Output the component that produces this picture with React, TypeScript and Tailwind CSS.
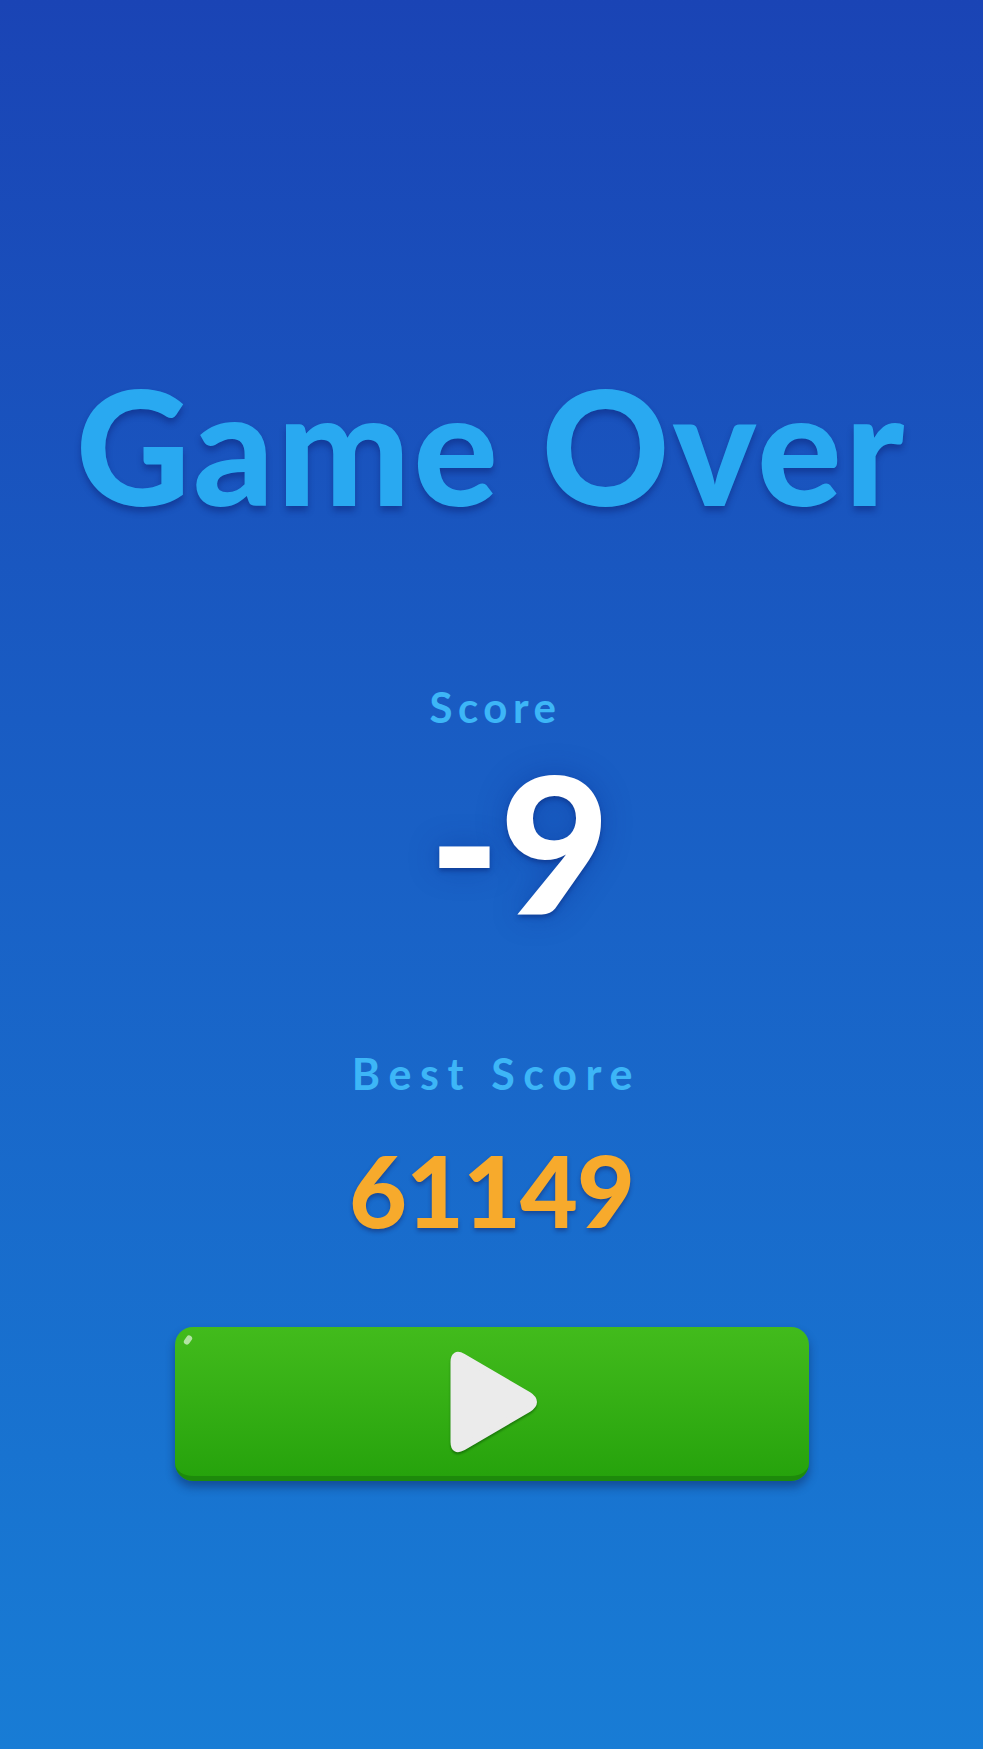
const PlayIcon = () => (
  <svg width="96" height="108" viewBox="0 0 96 108" className="drop-shadow-[0_2px_1px_rgba(0,60,0,0.45)]">
    <path
      d="M10 14 Q10 4 19 9 L84 47 Q95 54 84 61 L19 99 Q10 104 10 94 Z"
      fill="#ebebeb"
      stroke="#ebebeb"
      strokeWidth="7"
      strokeLinejoin="round"
    />
  </svg>
);

export default function App() {
  return (
    <div
      className="min-h-[1749px] w-full bg-gradient-to-b from-[#1a44b5] via-[#1961c6] to-[#187cd5] flex flex-col items-center"
      style={{ fontFamily: 'Lato, "Noto Sans", sans-serif' }}
    >
      {/* titre */}
      <h1 className="mt-[366px] text-[158px] leading-none font-black text-[#29a9f1] tracking-[3px] [text-shadow:0_5px_6px_rgba(10,30,110,0.45)]">
        Game Over
      </h1>

      {/* score courant */}
      <div className="mt-[162px] pl-[8px] text-[42px] leading-none font-bold tracking-[0.13em] text-[#3db6f7]">Score</div>
      <div className="mt-[18px] pl-[56px] text-[190px] leading-none font-black text-white [text-shadow:0_3px_4px_rgba(10,40,120,0.5),0_0_30px_rgba(10,40,140,0.35)]">
        -9
      </div>

      {/* meilleur score */}
      <div className="mt-[116px] pl-[10px] text-[43px] leading-none font-bold tracking-[0.2em] text-[#3db6f7]">Best Score</div>
      <div className="mt-[44px] text-[100px] leading-none font-black tracking-[-1px] text-[#f7aa2c] [text-shadow:0_3px_4px_rgba(20,30,90,0.45)]">
        61149
      </div>

      {/* bouton rejouer */}
      <button className="mt-[88px] w-[634px] h-[154px] rounded-[18px] bg-gradient-to-b from-[#42bb1c] to-[#26a30c] border-b-[5px] border-[#1d8a0b] shadow-[0_6px_10px_rgba(10,30,80,0.45)] flex items-center justify-center relative">
        <span className="absolute left-[10px] top-[8px] w-[6px] h-[10px] rounded-full bg-white/60 rotate-[35deg]" />
        <PlayIcon />
      </button>
    </div>
  );
}
